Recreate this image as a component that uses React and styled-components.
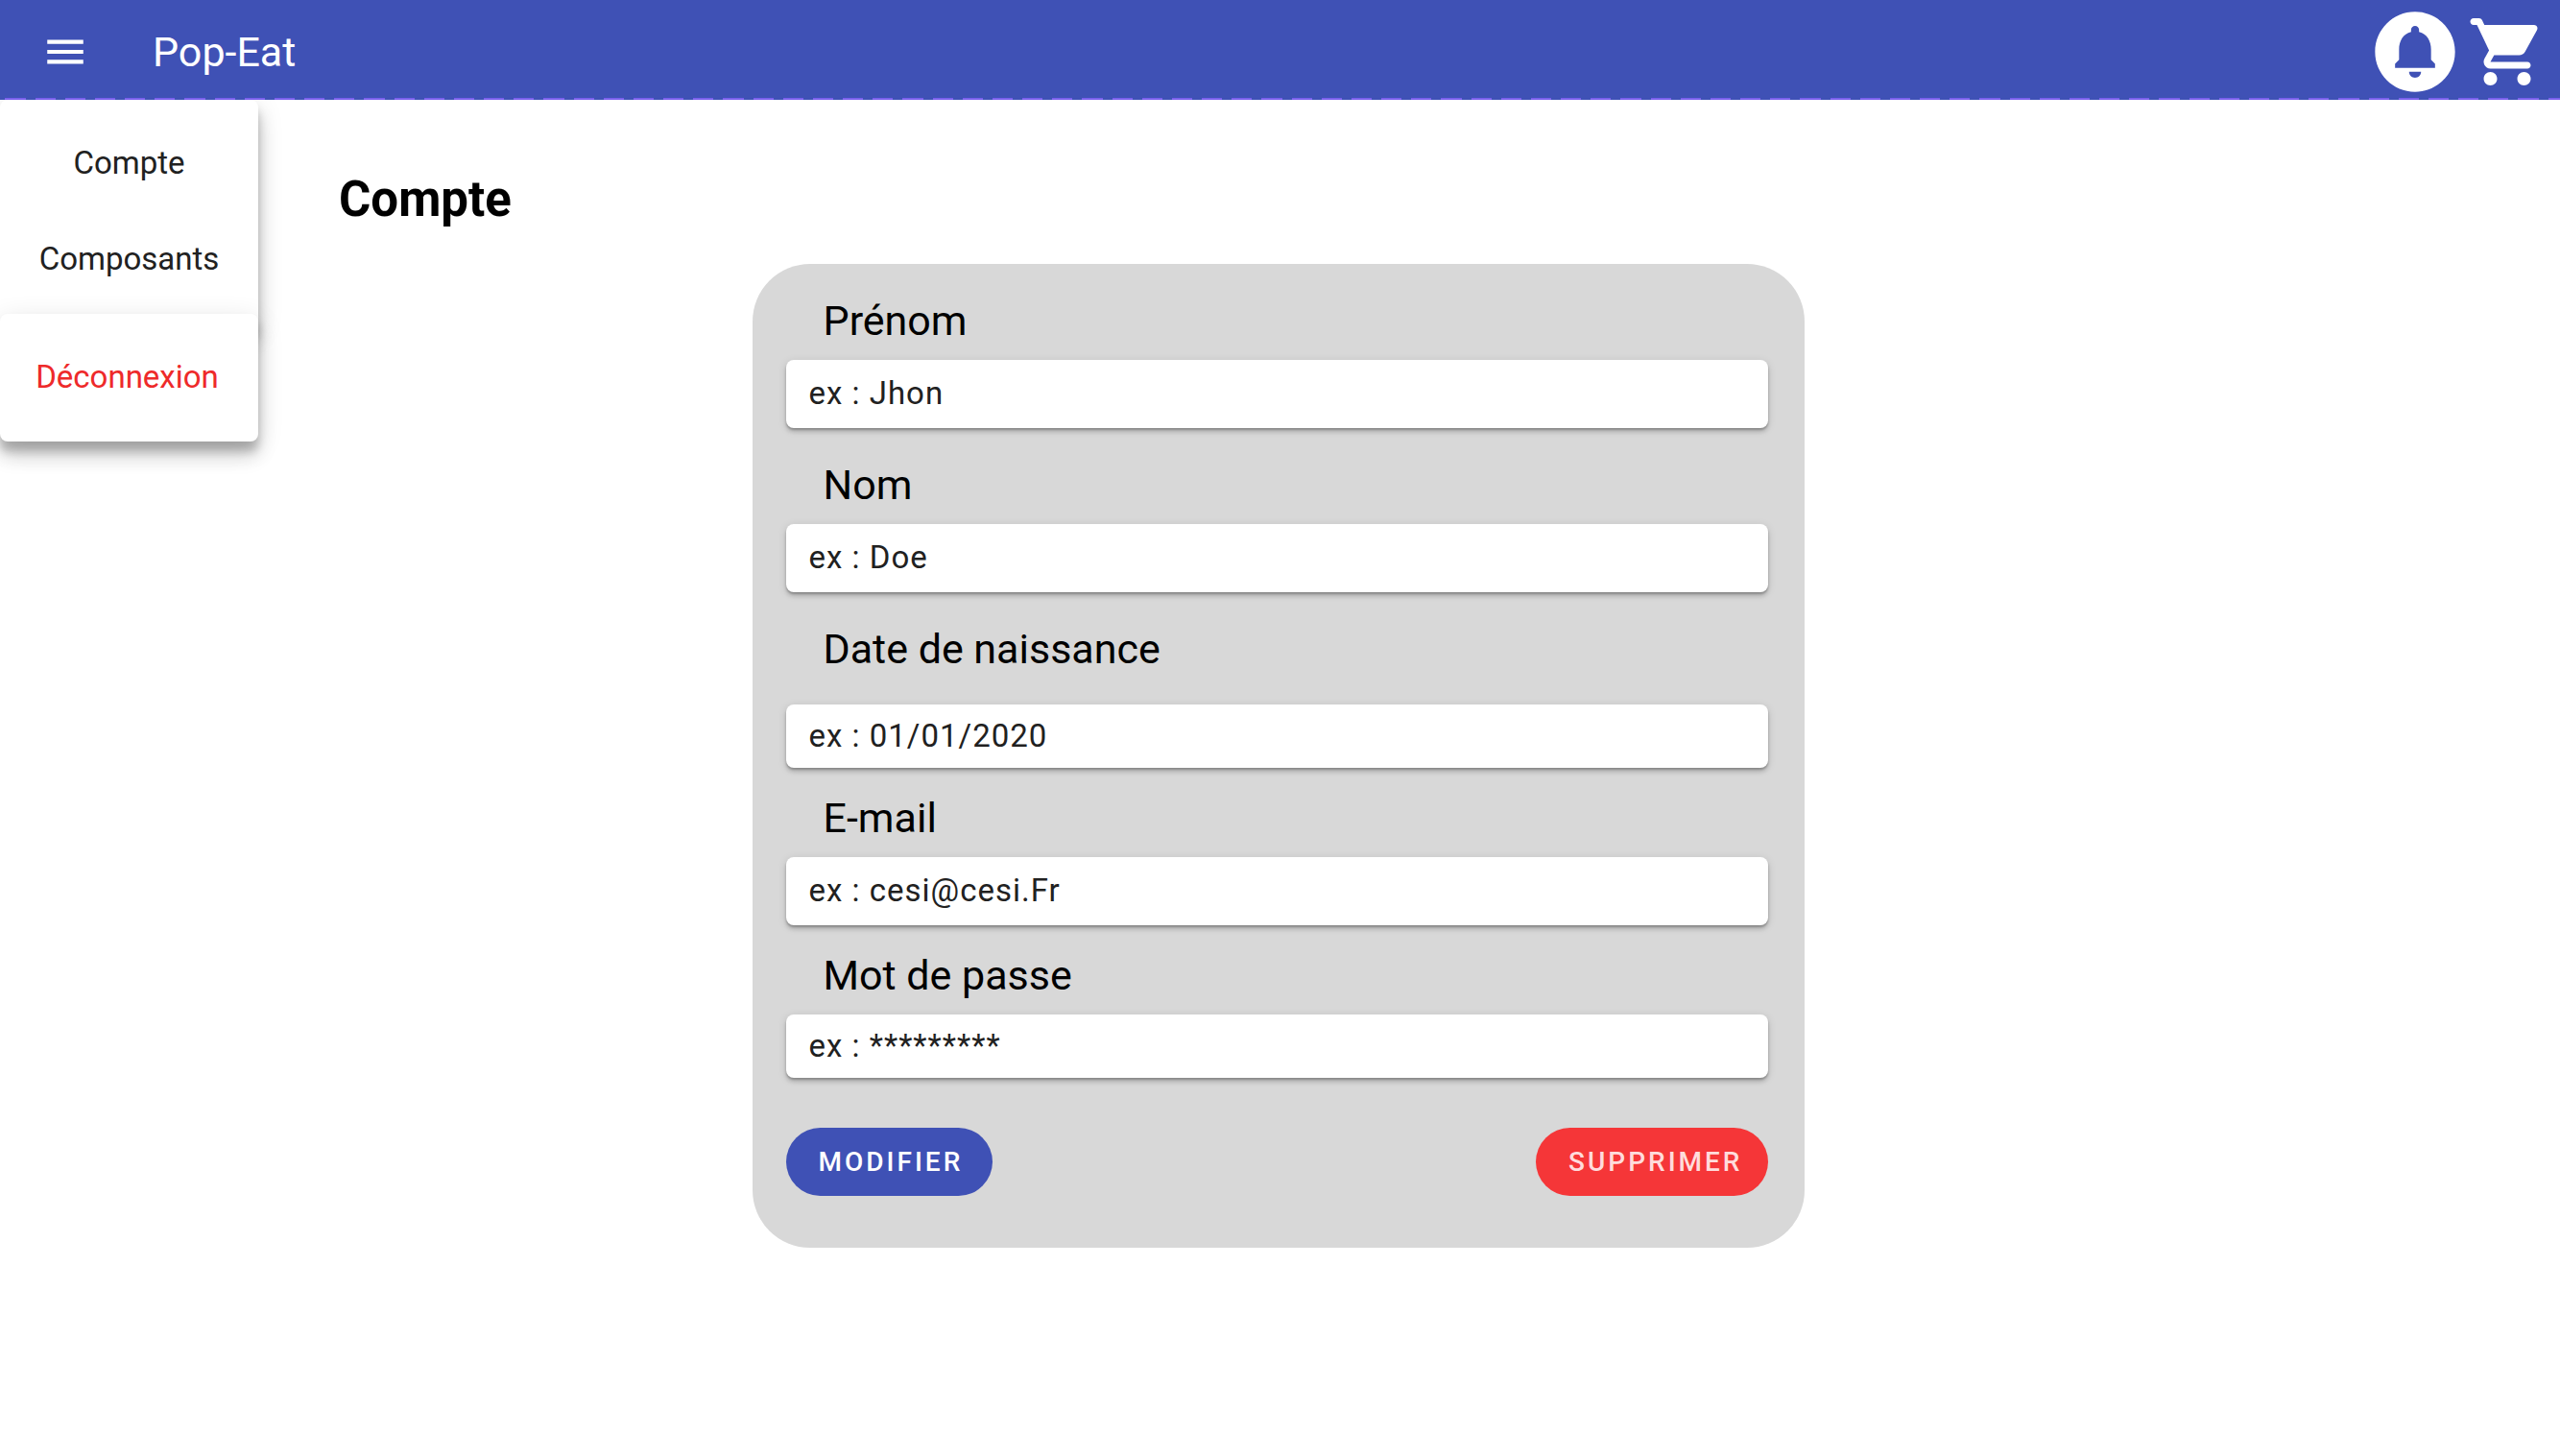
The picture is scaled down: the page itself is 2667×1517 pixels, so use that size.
import React from "react";
import styled, { createGlobalStyle } from "styled-components";

const GlobalStyle = createGlobalStyle`
  *, *::before, *::after { box-sizing: border-box; }
  body {
    margin: 0;
    background: #ffffff;
    color: #000000;
    font-family: Roboto, "Noto Sans", sans-serif;
  }
  button, input { font-family: inherit; }
`;

const Page = styled.div`
  min-height: 100vh;
  background: #ffffff;
`;

const Header = styled.header`
  position: relative;
  z-index: 1;
`;

const Bar = styled.div`
  position: relative;
  z-index: 1;
  display: flex;
  align-items: center;
  height: 104px;
  padding: 4px 13px 0 43px;
  background:
    repeating-linear-gradient(90deg, #7b61ec 0 21px, transparent 21px 31px) 6px 100% / 187px 2px repeat-x,
    #3f51b5;
`;

const IconButton = styled.button`
  display: flex;
  padding: 0;
  border: 0;
  background: none;
  color: #ffffff;
  cursor: pointer;
`;

const Icon = styled.svg`
  display: block;
  width: ${(p) => p.$size}px;
  height: ${(p) => p.$size}px;
  fill: currentColor;
`;

const Brand = styled.span`
  margin-left: 66px;
  color: #ffffff;
  font-size: 43px;
  line-height: 48px;
`;

const Actions = styled.div`
  display: flex;
  align-items: center;
  gap: 4px;
  margin-left: auto;
`;

const Menu = styled.nav`
  position: absolute;
  top: 100%;
  left: 0;
  width: 269px;
`;

const MenuGroup = styled.div`
  display: flex;
  flex-direction: column;
  padding: ${(p) => p.$pad};
  border-radius: 8px;
  background: #ffffff;
  box-shadow:
    0 10px 10px rgba(0, 0, 0, 0.2),
    0 16px 20px rgba(0, 0, 0, 0.14),
    0 6px 28px rgba(0, 0, 0, 0.12);

  & + & {
    position: relative;
    margin-top: -16px;
  }
`;

const MenuLink = styled.a`
  color: ${(p) => (p.$danger ? "#ee2a2a" : "#212121")};
  font-size: 33px;
  line-height: 100px;
  text-align: center;
  text-decoration: none;
`;

const Main = styled.main`
  padding: 72px 16px 48px 12px;
`;

const Title = styled.h1`
  margin: 0 0 35px 341px;
  font-size: 51px;
  font-weight: 700;
  line-height: 64px;
`;

const Card = styled.form`
  width: 100%;
  max-width: 1096px;
  margin: 0 auto;
  padding: 0 38px 54px 35px;
  border-radius: 60px;
  background: #d8d8d8;
`;

const Field = styled.div`
  display: flex;
  flex-direction: column;
  gap: ${(p) => (p.$spread ? 34 : 17)}px;
  padding-top: ${(p) => (p.$tight ? 28 : 35)}px;
`;

const Label = styled.label`
  padding-left: 39px;
  font-size: 43px;
  line-height: 48px;
`;

const Input = styled.input`
  width: 100%;
  height: ${(p) => (p.$short ? 66 : 71)}px;
  padding: 0 24px 2px;
  border: 0;
  border-radius: 8px;
  background: #ffffff;
  color: #212121;
  font-size: 33px;
  letter-spacing: 1px;
  box-shadow:
    0 2px 2px rgba(0, 0, 0, 0.2),
    0 4px 4px rgba(0, 0, 0, 0.14),
    0 2px 10px rgba(0, 0, 0, 0.12);

  &::placeholder {
    color: #212121;
    opacity: 1;
  }
`;

const Buttons = styled.div`
  display: flex;
  justify-content: space-between;
  padding-top: 52px;
`;

const Button = styled.button`
  height: 71px;
  padding: ${(p) => (p.$danger ? "0 26px 0 34px" : "0 31px 0 34px")};
  border: 0;
  border-radius: 36px;
  background: ${(p) => (p.$danger ? "#f53638" : "#3f51b5")};
  color: ${(p) => (p.$danger ? "#ffdcdc" : "#ffffff")};
  font-size: 28px;
  font-weight: 500;
  letter-spacing: 3px;
  text-transform: uppercase;
  cursor: pointer;
`;

const fields = [
  { id: "prenom", label: "Prénom", hint: "ex : Jhon", type: "text" },
  { id: "nom", label: "Nom", hint: "ex : Doe", type: "text" },
  { id: "naissance", label: "Date de naissance", hint: "ex : 01/01/2020", type: "text", spread: true, short: true },
  { id: "email", label: "E-mail", hint: "ex : cesi@cesi.Fr", type: "email", tight: true },
  { id: "passe", label: "Mot de passe", hint: "ex : *********", type: "password", tight: true, short: true },
];

const MenuIcon = () => (
  <Icon $size={50} viewBox="0 0 24 24" aria-hidden="true">
    <path d="M3 18h18v-2H3v2zm0-5h18v-2H3v2zm0-7v2h18V6H3z" />
  </Icon>
);

const BellIcon = () => (
  <Icon $size={100} viewBox="0 0 24 24" aria-hidden="true">
    <path d="M12 2C6.480 2 2 6.480 2 12s4.480 10 10 10 10-4.480 10-10S17.520 2 12 2zm0 16.500c-.83 0-1.500-.67-1.500-1.500h3c0 .83-.67 1.500-1.500 1.500zm5-2.500H7v-1l1-1v-2.610C8 9.270 9.030 7.470 11 7v-.5c0-.57.430-1 1-1s1 .430 1 1V7c1.970.470 3 2.280 3 4.390V14l1 1v1z" />
  </Icon>
);

const CartIcon = () => (
  <Icon $size={84} viewBox="0 0 24 24" aria-hidden="true">
    <path d="M7 18c-1.100 0-1.990.9-1.990 2S5.900 22 7 22s2-.9 2-2-.9-2-2-2zM1 3c0 .55.45 1 1 1h1l3.600 7.590-1.350 2.440C4.520 15.370 5.480 17 7 17h11c.55 0 1-.45 1-1s-.45-1-1-1H7l1.100-2h7.450c.75 0 1.410-.41 1.750-1.030l3.580-6.490c.37-.66-.11-1.480-.87-1.480H5.210l-.67-1.430c-.16-.35-.52-.57-.9-.57H2c-.55 0-1 .45-1 1zm16 15c-1.100 0-1.990.9-1.990 2s.89 2 1.990 2 2-.9 2-2-.9-2-2-2z" />
  </Icon>
);

export default function App() {
  return (
    <Page>
      <GlobalStyle />
      <Header>
        <Bar>
          <IconButton type="button" aria-label="Menu">
            <MenuIcon />
          </IconButton>
          <Brand>Pop-Eat</Brand>
          <Actions>
            <IconButton type="button" aria-label="Notifications">
              <BellIcon />
            </IconButton>
            <IconButton type="button" aria-label="Panier">
              <CartIcon />
            </IconButton>
          </Actions>
        </Bar>
        <Menu>
          <MenuGroup $pad="16px 0 23px">
            <MenuLink href="#compte">Compte</MenuLink>
            <MenuLink href="#composants">Composants</MenuLink>
          </MenuGroup>
          <MenuGroup $pad="16px 4px 17px 0">
            <MenuLink href="#deconnexion" $danger>
              Déconnexion
            </MenuLink>
          </MenuGroup>
        </Menu>
      </Header>
      <Main>
        <Title>Compte</Title>
        <Card onSubmit={(e) => e.preventDefault()}>
          {fields.map((f) => (
            <Field key={f.id} $spread={f.spread} $tight={f.tight}>
              <Label htmlFor={f.id}>{f.label}</Label>
              <Input id={f.id} type={f.type} placeholder={f.hint} $short={f.short} />
            </Field>
          ))}
          <Buttons>
            <Button type="submit">Modifier</Button>
            <Button type="button" $danger>
              Supprimer
            </Button>
          </Buttons>
        </Card>
      </Main>
    </Page>
  );
}
